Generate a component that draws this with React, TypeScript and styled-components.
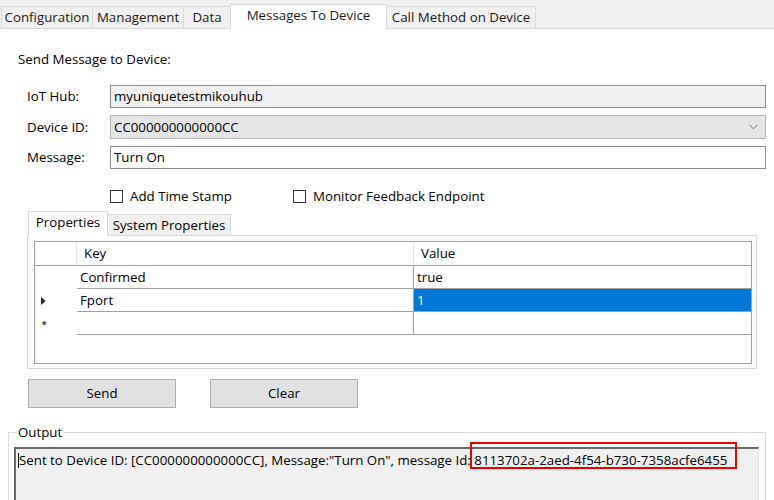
import React from "react";
import styled, { createGlobalStyle } from "styled-components";

const Global = createGlobalStyle`
  html, body { margin: 0; padding: 0; background: #ffffff; }
  body { font-family: "Open Sans", "Liberation Sans", Arial, sans-serif; font-size: 13.3px; color: #000; }
  * { box-sizing: border-box; }
`;

const Page = styled.div`
  width: 774px;
  height: 500px;
  overflow: hidden;
  background: #fff;
  display: flex;
  flex-direction: column;
`;

const TabStrip = styled.div`
  display: flex;
  align-items: flex-end;
  height: 29px;
  flex: none;
  padding-left: 1px;
  background: #f0f0f0;
  border-bottom: 1px solid #d9d9d9;
`;

const Tab = styled.div<{ $w: number; $active?: boolean }>`
  width: ${(p) => p.$w}px;
  height: ${(p) => (p.$active ? 25 : 22)}px;
  margin-bottom: ${(p) => (p.$active ? -1 : 0)}px;
  margin-right: -1px;
  position: relative;
  z-index: ${(p) => (p.$active ? 1 : 0)};
  display: flex;
  align-items: center;
  justify-content: center;
  padding-bottom: ${(p) => (p.$active ? 3 : 0)}px;
  background: ${(p) => (p.$active ? "#ffffff" : "#f0f0f0")};
  border: 1px solid #d9d9d9;
  border-bottom: none;
  color: #1a1a1a;
  white-space: nowrap;
  line-height: 15px;
`;

const Body = styled.div`
  display: flex;
  flex-direction: column;
  padding-top: 23px;
`;

const SectionTitle = styled.div`
  margin-left: 18px;
  line-height: 15px;
`;

const Form = styled.div`
  margin: 18px 0 0 27px;
  width: 739px;
  display: grid;
  grid-template-columns: 83px 1fr;
  row-gap: 7px;
  align-items: center;
`;

const Label = styled.div`
  line-height: 15px;
`;

const Field = styled.div<{ $h: number; $bg: string; $border: string }>`
  height: ${(p) => p.$h}px;
  background: ${(p) => p.$bg};
  border: 1px solid ${(p) => p.$border};
  display: flex;
  align-items: center;
  justify-content: space-between;
  padding: 0 7px 0 3px;
  line-height: 15px;
`;

const CheckRow = styled.div`
  margin: 20px 0 0 110px;
  height: 13px;
  display: grid;
  grid-template-columns: 183px auto;
  align-items: center;
`;

const CheckItem = styled.label`
  display: flex;
  align-items: center;
  gap: 7px;
  line-height: 15px;
  white-space: nowrap;
`;

const Box = styled.span`
  width: 13px;
  height: 13px;
  border: 1px solid #333;
  background: #fff;
  flex: none;
`;

const InnerTabs = styled.div`
  margin: 9px 0 0 27px;
  width: 730px;
  display: flex;
  flex-direction: column;
`;

const InnerStrip = styled.div`
  display: flex;
  align-items: flex-end;
  height: 24px;
  padding-left: 1px;
`;

const InnerTab = styled.div<{ $w: number; $active?: boolean }>`
  width: ${(p) => p.$w}px;
  height: ${(p) => (p.$active ? 25 : 21)}px;
  margin-bottom: ${(p) => (p.$active ? -1 : 0)}px;
  margin-right: -1px;
  position: relative;
  z-index: ${(p) => (p.$active ? 1 : 0)};
  display: flex;
  align-items: center;
  justify-content: center;
  padding-bottom: ${(p) => (p.$active ? 3 : 0)}px;
  background: ${(p) => (p.$active ? "#ffffff" : "#f0f0f0")};
  border: 1px solid #d9d9d9;
  border-bottom: none;
  line-height: 15px;
  white-space: nowrap;
`;

const Panel = styled.div`
  border: 1px solid #d9d9d9;
  background: #fff;
  padding: 5px 4px 4px 6px;
`;

const Grid = styled.div`
  height: 123px;
  border: 1px solid #a0a0a0;
  background: #fff;
  display: grid;
  grid-template-columns: 42px 337px 337px;
  grid-auto-rows: 23px;
  grid-template-rows: 24px;
  align-content: start;
`;

const HeadCell = styled.div<{ $pad?: number; $sep?: boolean }>`
  border-bottom: 1px solid #a0a0a0;
  border-right: ${(p) => (p.$sep ? "1px solid #e3e3e3" : "none")};
  padding-left: ${(p) => p.$pad ?? 0}px;
  display: flex;
  align-items: center;
  line-height: 15px;
`;

const RowHead = styled.div`
  display: flex;
  align-items: center;
  justify-content: flex-start;
  padding-left: 6px;
`;

const Cell = styled.div<{ $sel?: boolean; $sep?: boolean; $pad: number }>`
  border-bottom: 1px solid #a0a0a0;
  border-right: ${(p) => (p.$sep ? "1px solid #a0a0a0" : "none")};
  background: ${(p) => (p.$sel ? "#0078d7" : "#fff")};
  color: ${(p) => (p.$sel ? "#fff" : "#000")};
  padding-left: ${(p) => p.$pad}px;
  display: flex;
  align-items: center;
  line-height: 15px;
`;

const NewRowMark = styled.span`
  font-family: "Liberation Sans", Arial, sans-serif;
  font-size: 11px;
  line-height: 8px;
  font-weight: bold;
  color: #333;
  margin-left: 1px;
  padding-top: 3px;
`;

const ButtonRow = styled.div`
  margin: 10px 0 0 28px;
  display: flex;
  gap: 34px;
`;

const Button = styled.button`
  width: 148px;
  height: 29px;
  background: #e1e1e1;
  border: 1px solid #adadad;
  font: inherit;
  color: #000;
  padding: 0;
  line-height: 15px;
`;

const Group = styled.fieldset`
  margin: 17px 8px 0 8px;
  border: 1px solid #dcdcdc;
  padding: 7px 6px 0 5px;
  min-width: 0;
`;

const Legend = styled.legend`
  padding: 0 1px;
  margin-left: 3px;
  line-height: 15px;
  font-size: 13.3px;
`;

const OutputBox = styled.div`
  height: 80px;
  background: #f0f0f0;
  border-top: 2px solid #696969;
  border-left: 2px solid #696969;
  border-right: 1px solid #e3e3e3;
  padding: 4px 0 0 2px;
  line-height: 15px;
  white-space: nowrap;
  display: flex;
  align-items: flex-start;
`;

const Caret = styled.span`
  width: 1px;
  height: 15px;
  background: #000;
  flex: none;
`;

const Highlight = styled.span`
  position: relative;
  display: inline-block;
  line-height: 15px;
  &::after {
    content: "";
    position: absolute;
    left: -4px;
    right: -10px;
    top: -11px;
    bottom: -1px;
    border: 2px solid #ee0000;
    pointer-events: none;
  }
`;

const Chevron = () => (
  <svg width="9" height="6" viewBox="0 0 9 6">
    <polyline points="0.5,0.8 4.5,4.8 8.5,0.8" fill="none" stroke="#707070" strokeWidth="1" />
  </svg>
);

const Arrow = () => (
  <svg width="5" height="8" viewBox="0 0 5 8">
    <polygon points="0,0 4.5,4 0,8" fill="#222" />
  </svg>
);

const topTabs = [
  { label: "Configuration", w: 92 },
  { label: "Management", w: 92 },
  { label: "Data", w: 48 },
  { label: "Messages To Device", w: 157, active: true },
  { label: "Call Method on Device", w: 150 },
];

const rows = [
  { key: "Confirmed", value: "true", mark: null as React.ReactNode, sel: false },
  { key: "Fport", value: "1", mark: <Arrow />, sel: true },
  { key: "", value: "", mark: <NewRowMark>*</NewRowMark>, sel: false },
];

export default function App() {
  return (
    <Page>
      <Global />
      <TabStrip>
        {topTabs.map((t) => (
          <Tab key={t.label} $w={t.w} $active={t.active}>
            {t.label}
          </Tab>
        ))}
      </TabStrip>
      <Body>
        <SectionTitle>Send Message to Device:</SectionTitle>
        <Form>
          <Label>IoT Hub:</Label>
          <Field $h={23} $bg="#f0f0f0" $border="#8a8a8a">myuniquetestmikouhub</Field>
          <Label>Device ID:</Label>
          <Field $h={24} $bg="#e5e5e5" $border="#b4b4b4">
            <span>CC000000000000CC</span>
            <Chevron />
          </Field>
          <Label>Message:</Label>
          <Field $h={23} $bg="#ffffff" $border="#8a8a8a">Turn On</Field>
        </Form>
        <CheckRow>
          <CheckItem>
            <Box />
            Add Time Stamp
          </CheckItem>
          <CheckItem>
            <Box />
            Monitor Feedback Endpoint
          </CheckItem>
        </CheckRow>
        <InnerTabs>
          <InnerStrip>
            <InnerTab $w={80} $active>
              Properties
            </InnerTab>
            <InnerTab $w={124}>System Properties</InnerTab>
          </InnerStrip>
          <Panel>
            <Grid>
              <HeadCell $sep />
              <HeadCell $pad={7} $sep>
                Key
              </HeadCell>
              <HeadCell $pad={7}>Value</HeadCell>
              {rows.map((r, i) => (
                <React.Fragment key={i}>
                  <RowHead>{r.mark}</RowHead>
                  <Cell $pad={3} $sep>
                    {r.key}
                  </Cell>
                  <Cell $pad={3} $sel={r.sel}>
                    {r.value}
                  </Cell>
                </React.Fragment>
              ))}
            </Grid>
          </Panel>
        </InnerTabs>
        <ButtonRow>
          <Button>Send</Button>
          <Button>Clear</Button>
        </ButtonRow>
        <Group>
          <Legend>Output</Legend>
          <OutputBox>
            <Caret />
            <span>
              Sent to Device ID: [CC000000000000CC], Message:"Turn On", message Id:{" "}
              <Highlight>8113702a-2aed-4f54-b730-7358acfe6455</Highlight>
            </span>
          </OutputBox>
        </Group>
      </Body>
    </Page>
  );
}
